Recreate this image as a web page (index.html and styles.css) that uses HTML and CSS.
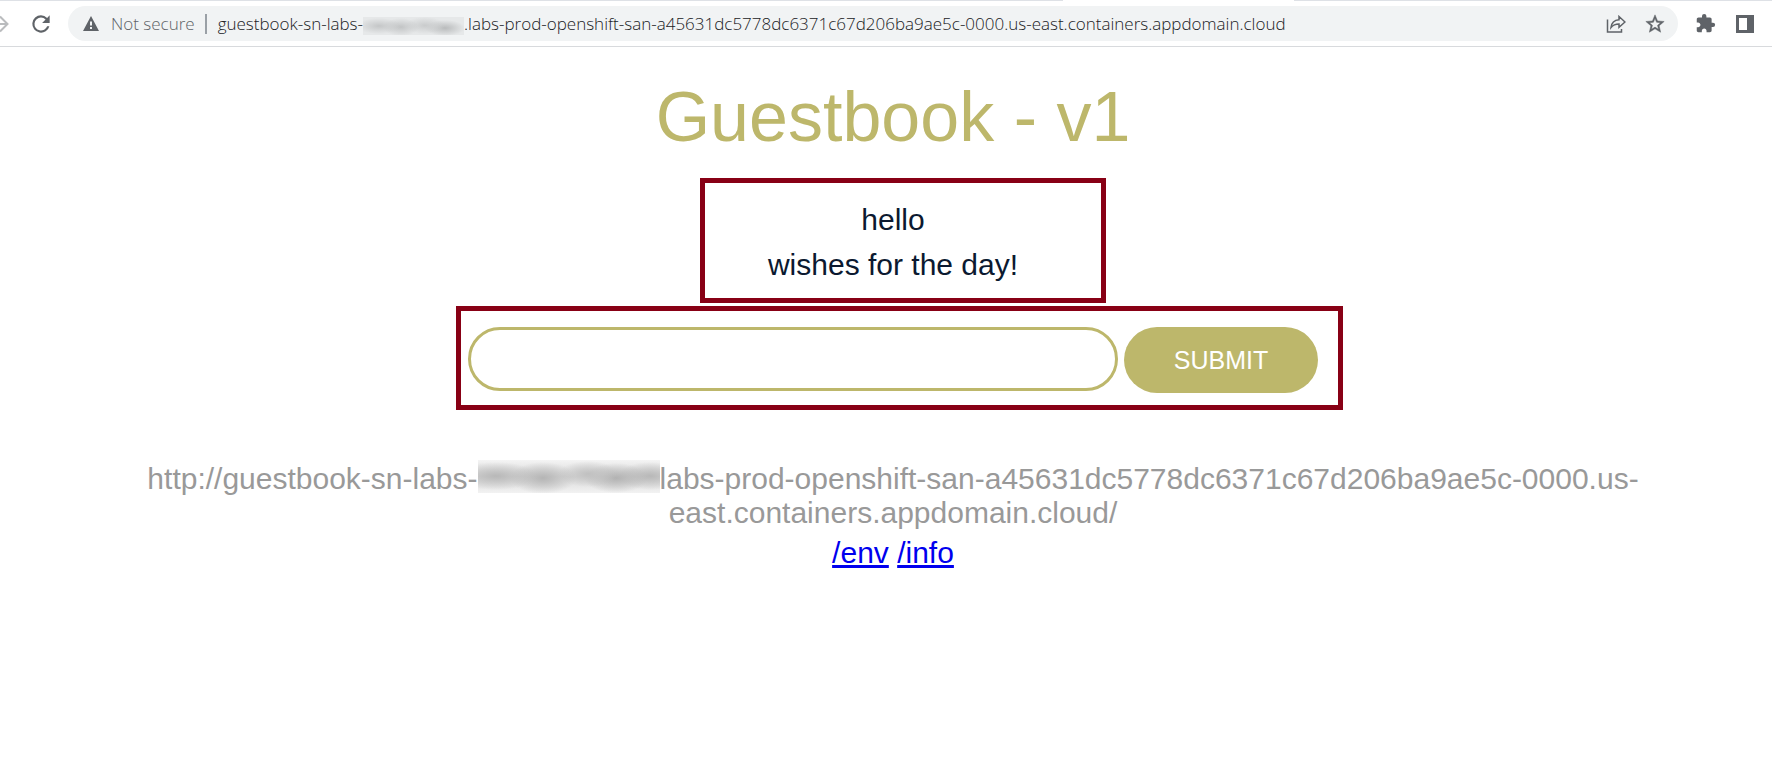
FILE: index.html
```html
<!DOCTYPE html>
<html lang="en">
<head>
<meta charset="utf-8">
<title>Guestbook - v1</title>
<link rel="stylesheet" href="styles.css">
</head>
<body>
<header class="toolbar">
  <button class="tool forward" aria-label="Forward">
    <svg width="9" height="18" viewBox="0 0 9 18" fill="none" stroke="#babcbe" stroke-width="2"><path d="M0 9H7.500M0 1.500L7.500 9L0 16.500"/></svg>
  </button>
  <button class="tool reload" aria-label="Reload">
    <svg width="26" height="26" viewBox="0 0 24 24" fill="#5f6368"><path d="M17.650 6.350A7.960 7.960 0 0 0 12 4a8 8 0 1 0 7.730 10h-2.080A6 6 0 1 1 12 6c1.660 0 3.140.690 4.220 1.780L13 11h7V4z"/></svg>
  </button>
  <div class="address">
    <svg class="warning" width="16" height="15" viewBox="0 0 16 15"><path fill="#5f6368" d="M8 0L16 15H0z"/><path fill="#f1f3f4" d="M7 5.500h2v4H7zM7 11h2v2H7z"/></svg>
    <span class="security">Not secure</span>
    <span class="divider"></span>
    <span class="url">guestbook-sn-labs-<span class="mask mask-small"></span>.labs-prod-openshift-san-a45631dc5778dc6371c67d206ba9ae5c-0000.us-east.containers.appdomain.cloud</span>
    <button class="tool share" aria-label="Share">
      <svg width="20" height="18" viewBox="0 0 20 18" fill="none" stroke="#5f6368" stroke-width="1.500"><path d="M1.500 4.500V17H15.500V14"/><path d="M5 12.500C5.500 8 8.500 5 13 4.700V1.500L19 7L13 12.300V9C9.500 9 7 10 5 12.500Z"/></svg>
    </button>
    <button class="tool star" aria-label="Bookmark this page">
      <svg width="22" height="22" viewBox="0 0 24 24" fill="#5f6368" stroke="#5f6368" stroke-width=".5"><path d="M22 9.240l-7.190-.620L12 2 9.190 8.630 2 9.240l5.460 4.730L5.820 21 12 17.270 18.180 21l-1.630-7.030L22 9.240zM12 15.400l-3.760 2.270 1-4.280-3.320-2.880 4.380-.380L12 6.100l1.710 4.040 4.380.380-3.320 2.880 1 4.280L12 15.400z"/></svg>
    </button>
  </div>
  <button class="tool extensions" aria-label="Extensions">
    <svg width="21" height="21" viewBox="0 0 24 24" fill="#5f6368"><path d="M20.500 11H19V7c0-1.100-.900-2-2-2h-4V3.500a2.500 2.500 0 0 0-5 0V5H4c-1.100 0-1.990.900-1.990 2v3.800H3.500c1.490 0 2.700 1.210 2.700 2.700s-1.210 2.700-2.700 2.700H2V20c0 1.100.900 2 2 2h3.800v-1.500c0-1.490 1.210-2.700 2.700-2.700s2.700 1.210 2.700 2.700V22H17c1.100 0 2-.900 2-2v-4h1.500a2.500 2.500 0 0 0 0-5z"/></svg>
  </button>
  <button class="tool panel" aria-label="Side panel">
    <svg width="18" height="18" viewBox="0 0 18 18"><path fill="#5f6368" d="M0 0H18V18H0z"/><path fill="#fff" d="M3 3H11V15H3z"/></svg>
  </button>
</header>
<main class="page">
  <h1 class="title">Guestbook - v1</h1>
  <section class="frame entries">
    <p class="entry">hello</p>
    <p class="entry">wishes for the day!</p>
  </section>
  <form class="frame form">
    <input class="entry-input" type="text" aria-label="Guestbook entry">
    <button class="submit" type="button">SUBMIT</button>
  </form>
  <footer class="info">
    <p class="host">http://guestbook-sn-labs-<span class="mask mask-large"></span>labs-prod-openshift-san-a45631dc5778dc6371c67d206ba9ae5c-0000.us-east.containers.appdomain.cloud/</p>
    <p class="links"><a href="#env">/env</a> <a href="#info">/info</a></p>
  </footer>
</main>
</body>
</html>
```
FILE: styles.css
```css
* { box-sizing: border-box; }

body {
  margin: 0;
  background: #fff;
  font-family: "Liberation Sans", Arial, sans-serif;
}

p, h1 { margin: 0; font-weight: normal; }

.toolbar {
  display: flex;
  align-items: center;
  height: 47px;
  padding: 6px 18px 5px 0;
  border-bottom: 1px solid #d8dadd;
  background: linear-gradient(90deg, #dee1e6 0 60%, #fff 60% 73%, #dee1e6 73%) 0 0 / 100% 1px no-repeat;
}

.tool {
  display: flex;
  flex: none;
  padding: 0;
  border: 0;
  background: none;
}

.reload { margin: 0 14px 0 19px; }

.address {
  display: flex;
  flex: 1;
  align-items: center;
  min-width: 0;
  height: 35px;
  padding: 0 12px 0 15px;
  border-radius: 18px;
  background: #f1f3f4;
  font-family: "Open Sans", sans-serif;
  font-size: 17px;
  font-weight: 300;
  line-height: 24px;
  white-space: nowrap;
}

.security { margin-left: 12px; color: #5f6368; }

.divider {
  width: 2px;
  height: 20px;
  margin: 0 11px 0 10px;
  background: #9aa0a6;
}

.url { flex: 1; min-width: 0; color: #202124; }
.share { margin-right: 18px; }
.extensions { margin-left: 17px; }
.panel { margin-left: 20px; }

.mask {
  display: inline-block;
  overflow: hidden;
}

.mask-small {
  width: 101px;
  height: 18px;
  vertical-align: -5px;
  background:
    radial-gradient(closest-side, #c4c6c7, transparent) -6px 1px / 44px 16px no-repeat,
    radial-gradient(closest-side, #c2c4c5, transparent) 20px 1px / 36px 18px no-repeat,
    radial-gradient(closest-side, #c9cbcc, transparent) 42px 0 / 40px 17px no-repeat,
    radial-gradient(closest-side, #b9bbbc, transparent) 62px 3px / 40px 16px no-repeat,
    #e6e8e9;
}

.mask-large {
  width: 182px;
  height: 33px;
  vertical-align: -4px;
  background:
    radial-gradient(closest-side, #b8b8b8, transparent) -24px 2px / 84px 28px no-repeat,
    radial-gradient(closest-side, #b5b5b5, transparent) 32px 2px / 66px 32px no-repeat,
    radial-gradient(closest-side, #c0c0c0, transparent) 80px 1px / 60px 26px no-repeat,
    radial-gradient(closest-side, #b2b2b2, transparent) 106px 3px / 64px 30px no-repeat,
    radial-gradient(closest-side, #b8b8b8, transparent) 140px 2px / 64px 28px no-repeat,
    linear-gradient(#f4f4f4, #d9d9d9 50%, #f2f2f2);
}

.page {
  display: flex;
  flex-direction: column;
  align-items: center;
  padding: 30px 0 0 14px;
  text-align: center;
}

.title {
  color: #bdb76b;
  font-size: 70px;
  line-height: 80px;
}

.frame { border: 5px solid #880015; }

.entries {
  width: 406px;
  margin: 21px 0 0 20px;
  padding: 14px 20px 11px 0;
}

.entry {
  color: #0b1930;
  font-size: 30px;
  line-height: 45px;
}

.form {
  display: flex;
  align-items: flex-start;
  gap: 6px;
  max-width: 100%;
  margin: 3px 0 0 13px;
  padding: 16px 20px 12px 7px;
}

.entry-input {
  width: 650px;
  min-width: 0;
  height: 64px;
  padding: 0 30px;
  border: 3px solid #bdb76b;
  border-radius: 32px;
  background: #fff;
  font: 30px "Liberation Sans", Arial, sans-serif;
}

.submit {
  flex: none;
  width: 194px;
  height: 66px;
  padding: 0;
  border: 0;
  border-radius: 33px;
  background: #bdb76b;
  color: #fff;
  font: 25px "Liberation Sans", Arial, sans-serif;
}

.info {
  padding: 50px 120px 0;
  color: #999;
  font-size: 30px;
  line-height: 34px;
}

.links { margin-top: 6px; }
.links a { color: #00e; }
```
